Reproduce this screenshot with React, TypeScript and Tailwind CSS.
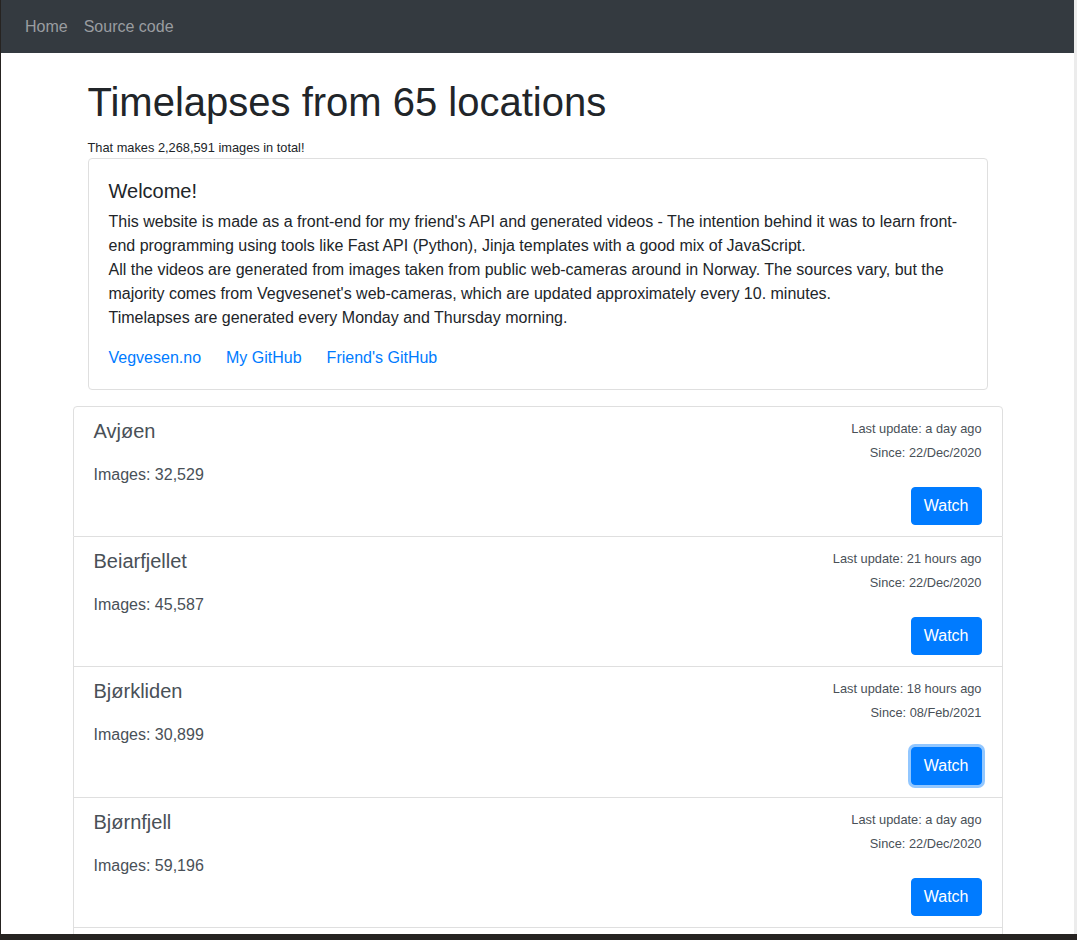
import React from "react";

const locations = [
  { name: "Avjøen", updated: "a day ago", since: "22/Dec/2020", images: "32,529" },
  { name: "Beiarfjellet", updated: "21 hours ago", since: "22/Dec/2020", images: "45,587" },
  { name: "Bjørkliden", updated: "18 hours ago", since: "08/Feb/2021", images: "30,899", focused: true },
  { name: "Bjørnfjell", updated: "a day ago", since: "22/Dec/2020", images: "59,196" },
  { name: "Bodø", updated: "a day ago", since: "22/Dec/2020", images: "61,204" },
];

function LocationItem({ item, first }: { item: (typeof locations)[number]; first: boolean }) {
  return (
    <div
      className={`border border-[#dfdfdf] px-5 pt-3 pb-[11.2px] text-[#495057] ${
        first ? "rounded-t" : "border-t-0"
      }`}
    >
      <div className="flex justify-between">
        <h5 className="text-xl leading-6">{item.name}</h5>
        <small className="text-[12.8px] leading-[19.2px]">Last update: {item.updated}</small>
      </div>
      <div className="flex h-5 justify-end">
        <small className="text-[12.8px] leading-[19.2px]">Since: {item.since}</small>
      </div>
      <p className="text-base leading-6">Images: {item.images}</p>
      <div className="flex justify-end">
        <button
          className={`rounded border border-[#007bff] bg-[#007bff] px-3 py-[6px] text-base leading-6 text-white ${
            item.focused ? "ring-[3px] ring-[#268fff]/50" : ""
          }`}
        >
          Watch
        </button>
      </div>
    </div>
  );
}

export default function App() {
  return (
    <div
      className="flex h-[940px] flex-col overflow-hidden bg-[#262321] text-[#212529]"
      style={{ fontFamily: '"Liberation Sans", Arial, sans-serif' }}
    >
      <div className="flex h-[934px] shrink-0 pl-px">
        <div className="flex-1 overflow-hidden bg-white">
          <nav className="flex h-[53px] items-center bg-[#343a40] pl-4 text-base">
            <a className="px-2 text-[#9a9da0]">Home</a>
            <a className="px-2 text-[#9a9da0]">Source code</a>
          </nav>

          <div className="mx-auto w-[960px] px-[15px]">
            <div className="px-[15px]">
              <h1 className="mt-[25px] mb-2 text-[40px] leading-[48px]">Timelapses from 65 locations</h1>
              <p className="h-6 pt-px text-base leading-6">
                <small className="text-[12.8px]">That makes 2,268,591 images in total!</small>
              </p>

              <div className="rounded border border-[#dfdfdf] px-5 pt-5 pb-[19px]">
                <h5 className="mb-[7px] text-xl leading-6">Welcome!</h5>
                <p className="text-base leading-6">
                  This website is made as a front-end for my friend's API and generated videos - The intention
                  behind it was to learn front-end programming using tools like Fast API (Python), Jinja templates
                  with a good mix of JavaScript.
                  <br />
                  All the videos are generated from images taken from public web-cameras around in Norway. The
                  sources vary, but the majority comes from Vegvesenet's web-cameras, which are updated
                  approximately every 10. minutes.
                  <br />
                  Timelapses are generated every Monday and Thursday morning.
                </p>
                <div className="mt-4 flex gap-[25px] text-base leading-6 text-[#007bff]">
                  <a>Vegvesen.no</a>
                  <a>My GitHub</a>
                  <a>Friend's GitHub</a>
                </div>
              </div>
            </div>

            <div className="mt-4">
              {locations.map((item, i) => (
                <LocationItem key={item.name} item={item} first={i === 0} />
              ))}
            </div>
          </div>
        </div>
        <div className="w-[3px] bg-[#ececec]" />
      </div>
    </div>
  );
}
